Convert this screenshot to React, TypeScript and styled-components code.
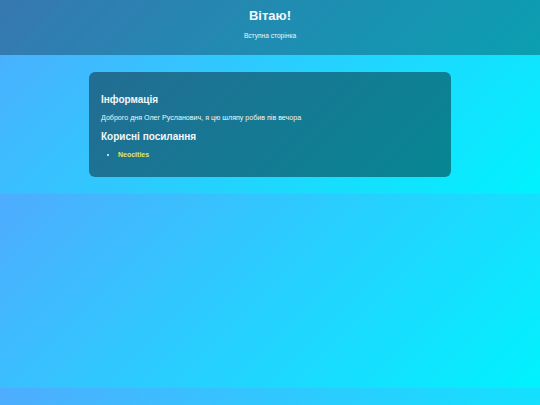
import React from "react";
import styled, { createGlobalStyle } from "styled-components";

const GlobalStyle = createGlobalStyle`
  html {
    margin: 0;
    padding: 0;
  }
  body {
    margin: 0;
    padding: 0;
    font-family: "Liberation Sans", Arial, sans-serif;
    font-size: 7px;
    color: #f2f7f8;
    background: linear-gradient(135deg, #4facfe 0%, #00f2fe 100%);
  }
`;

const Header = styled.header`
  background: rgba(0, 0, 0, 0.3);
  text-align: center;
  padding: 7.5px 0 0;
  height: 55px;
  box-sizing: border-box;
`;

const Title = styled.h1`
  margin: 0 0 9.6px;
  font-size: 13px;
  font-weight: 700;
  color: #f4f8fa;
`;

const Subtitle = styled.p`
  margin: 0;
  font-size: 6.6px;
  color: #eef5f8;
`;

const Card = styled.main`
  width: 362px;
  margin: 17px auto;
  box-sizing: border-box;
  padding: 13px 12px 10px;
  background: rgba(0, 0, 0, 0.42);
  border-radius: 6px;
  height: 105px;
`;

const SectionTitle = styled.h2`
  font-size: 10px;
  font-weight: 700;
  margin: 8.9px 0;
  color: #f2f7f9;
`;

const Text = styled.p`
  margin: 7px 0;
  font-size: 7.1px;
`;

const LinkList = styled.ul`
  margin: 7px 0;
  padding-left: 17px;
`;

const Item = styled.li`
  font-size: 7px;
`;

const Link = styled.a`
  color: #e0ea5a;
  font-weight: 700;
  text-decoration: none;
`;

export default function App() {
  return (
    <>
      <GlobalStyle />
      <Header>
        <Title>Вітаю!</Title>
        <Subtitle>Вступна сторінка</Subtitle>
      </Header>
      <Card>
        <SectionTitle>Інформація</SectionTitle>
        <Text>Доброго дня Олег Русланович, я цю шляпу робив пів вечора</Text>
        <SectionTitle>Корисні посилання</SectionTitle>
        <LinkList>
          <Item>
            <Link href="#">Neocities</Link>
          </Item>
        </LinkList>
      </Card>
    </>
  );
}
